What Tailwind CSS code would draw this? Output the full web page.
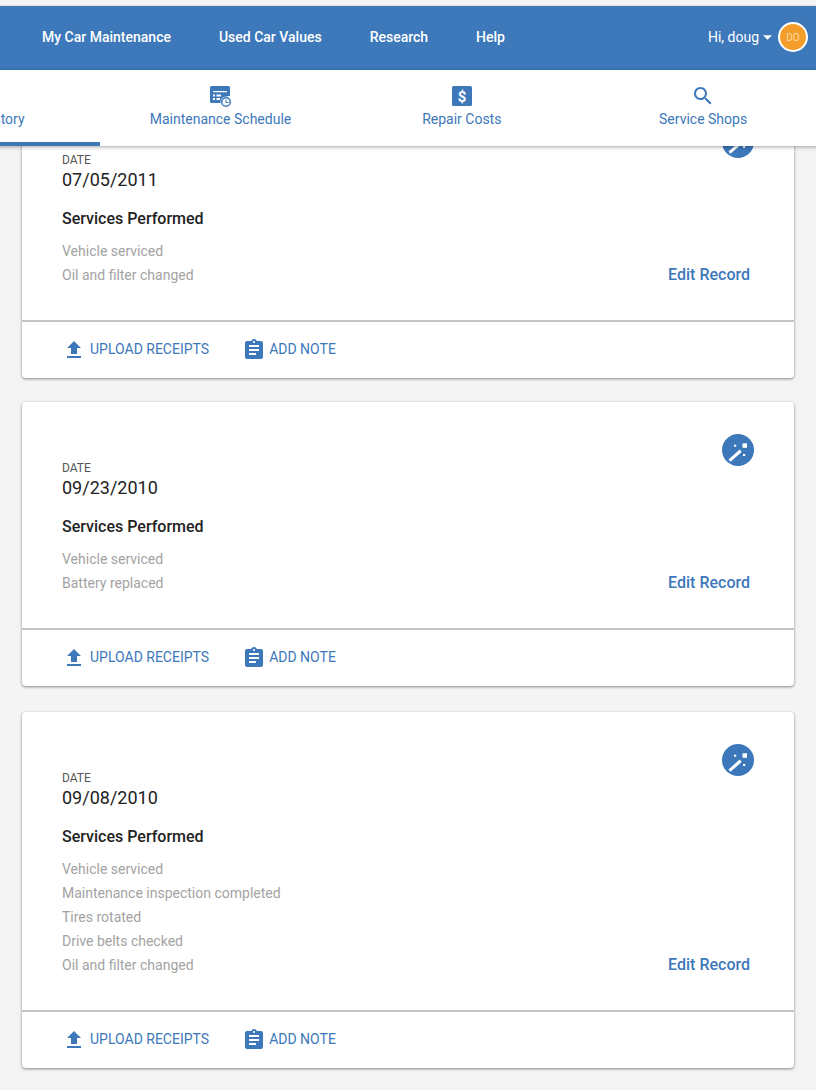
<!DOCTYPE html>
<html>
<head>
<meta charset="utf-8">
<script src="https://cdn.jsdelivr.net/npm/@tailwindcss/browser@4"></script>
</head>
<body class="bg-[#f4f4f4] font-['Roboto',sans-serif]">
<div class="relative h-[1090px] w-[816px] overflow-hidden">
  <header class="absolute inset-x-0 top-0 z-10 pt-[5px]">
    <div class="border-t border-[#e2e2e2]"></div>
    <div class="flex h-[64px] items-center justify-between bg-[#3c78ba] pb-[2px] pl-[42px] pr-2 text-[14px] text-white">
      <nav class="flex gap-12 font-medium">
        <span>My Car Maintenance</span>
        <span>Used Car Values</span>
        <span>Research</span>
        <span>Help</span>
      </nav>
      <div class="flex items-center">
        <span>Hi, doug</span>
        <svg class="ml-1 h-[5px] w-[9px]" viewBox="0 0 10 5"><path d="M0 0h10L5 5z" fill="#fff"/></svg>
        <span class="ml-[6px] flex h-[30px] w-[30px] items-center justify-center rounded-full border-2 border-white bg-[#f59d2a] text-[10px] text-[#f8d9a8]">DO</span>
      </div>
    </div>
    <div class="flex h-[76px] -ml-[142.25px] w-[966px] bg-white text-[14px] text-[#3c78ba] shadow-[0_1px_4px_rgba(0,0,0,0.35)]">
      <a class="flex w-[242.25px] flex-col items-center border-b-4 border-[#3c78ba] pr-[2px] pt-[14px]">
        <span class="h-6 w-6"></span>
        <span class="mt-[1px]">Service History</span>
      </a>
      <a class="flex w-[241.5px] flex-col items-center pt-[14px]">
        <svg class="h-6 w-6" viewBox="0 0 24 24" fill="#3c78ba"><path d="M3.500 2h17A1.500 1.500 0 0 1 22 3.500V12h-.5a6.500 6.500 0 0 0-6.500 6.500V19H3.500A1.500 1.500 0 0 1 2 17.500v-14A1.500 1.500 0 0 1 3.500 2z"/><path d="M5 7h14v1.300H5zM5 10.500h2v2H5zM8.500 10.500H13v2H8.500zM5 14h2v2H5zM8.500 14H12v2H8.500z" fill="#fff"/><circle cx="18" cy="18" r="5.500" fill="#fff"/><path d="M18 13a5 5 0 1 0 0 10 5 5 0 0 0 0-10zm0 8.500a3.500 3.500 0 1 1 0-7 3.500 3.500 0 0 1 0 7z"/><path d="M17.500 15.500h1V18h2v1h-3z"/></svg>
        <span class="mt-[1px]">Maintenance Schedule</span>
      </a>
      <a class="flex w-[241.5px] flex-col items-center pt-[14px]">
        <svg class="h-6 w-6" viewBox="0 0 24 24"><rect x="2" y="2" width="20" height="20" rx="1.500" fill="#3c78ba"/><text x="12" y="17.500" text-anchor="middle" font-family="Roboto" font-weight="700" font-size="15" fill="#fff">$</text></svg>
        <span class="mt-[1px]">Repair Costs</span>
      </a>
      <a class="flex w-[241.5px] flex-col items-center pt-[14px]">
        <svg class="h-6 w-6" viewBox="0 0 24 24" fill="#3c78ba"><path d="M15.500 14h-.79l-.28-.27C15.410 12.590 16 11.110 16 9.500 16 5.910 13.090 3 9.500 3S3 5.910 3 9.500 5.910 16 9.500 16c1.610 0 3.090-.59 4.230-1.570l.27.28v.79l5 4.990L20.490 19l-4.990-5zm-6 0C7.010 14 5 11.990 5 9.500S7.010 5 9.500 5 14 7.010 14 9.500 11.990 14 9.500 14z"/></svg>
        <span class="mt-[1px]">Service Shops</span>
      </a>
    </div>
  </header>

  <main class="flex flex-col px-[22px] pt-[94px]">
    <!-- card 1 -->
    <section class="h-[284px] rounded bg-white shadow-[0_1px_3px_rgba(0,0,0,0.45)] flex flex-col">
      <div class="relative h-[228px] shrink-0 border-b-2 border-[#c4c4c4] px-10 pt-[58px]">
        <svg class="absolute right-10 top-8 h-8 w-8" viewBox="0 0 32 32"><circle cx="16" cy="16" r="16" fill="#3c78ba"/><path d="M6.500 25.500L17.700 15.500l2 2.500L8.500 27.800z" fill="#fff"/><rect x="20.500" y="9.300" width="4.500" height="4.500" fill="#fff"/><rect x="12" y="10.700" width="2.200" height="2" fill="#fff"/><rect x="21" y="20" width="2.200" height="2" fill="#fff"/></svg>
        <p class="text-[12px] leading-4 text-[#555]">DATE</p>
        <p class="text-[18px] leading-6 text-[#222]">07/05/2011</p>
        <h3 class="mt-[15px] text-[16px] font-medium leading-6 text-[#222]">Services Performed</h3>
        <div class="mt-[8px] flex items-end justify-between">
          <ul class="text-[14px] leading-6 text-[#a3a3a3]">
            <li>Vehicle serviced</li>
            <li>Oil and filter changed</li>
          </ul>
          <span class="mr-[4px] text-[16px] font-medium leading-6 text-[#3c78ba]">Edit Record</span>
        </div>
      </div>
      <div class="flex flex-1 items-center gap-[33px] pl-10 text-[14px] text-[#3c78ba]">
        <span class="flex items-center gap-[4px]">
          <svg class="h-6 w-6" viewBox="0 0 24 24" fill="#3c78ba"><path d="M9 16h6v-6h4l-7-7-7 7h4zm-4 2h14v2H5z"/></svg><span class="pb-[2px]">UPLOAD RECEIPTS</span>
        </span>
        <span class="flex items-center gap-[3px]">
          <svg class="h-6 w-6" viewBox="0 0 24 24" fill="#3c78ba"><path d="M19 3h-4.180C14.400 1.840 13.300 1 12 1c-1.300 0-2.400.84-2.820 2H5c-1.100 0-2 .9-2 2v14c0 1.100.9 2 2 2h14c1.100 0 2-.9 2-2V5c0-1.100-.9-2-2-2zm-7 0c.55 0 1 .45 1 1s-.45 1-1 1-1-.45-1-1 .45-1 1-1zm2 14H7v-2h7v2zm3-4H7v-2h10v2zm0-4H7V7h10v2z"/></svg><span class="pb-[2px]">ADD NOTE</span>
        </span>
      </div>
    </section>

    <!-- card 2 -->
    <section class="mt-6 h-[284px] rounded bg-white shadow-[0_1px_3px_rgba(0,0,0,0.45)] flex flex-col">
      <div class="relative h-[228px] shrink-0 border-b-2 border-[#c4c4c4] px-10 pt-[58px]">
        <svg class="absolute right-10 top-8 h-8 w-8" viewBox="0 0 32 32"><circle cx="16" cy="16" r="16" fill="#3c78ba"/><path d="M6.500 25.500L17.700 15.500l2 2.500L8.500 27.800z" fill="#fff"/><rect x="20.500" y="9.300" width="4.500" height="4.500" fill="#fff"/><rect x="12" y="10.700" width="2.200" height="2" fill="#fff"/><rect x="21" y="20" width="2.200" height="2" fill="#fff"/></svg>
        <p class="text-[12px] leading-4 text-[#555]">DATE</p>
        <p class="text-[18px] leading-6 text-[#222]">09/23/2010</p>
        <h3 class="mt-[15px] text-[16px] font-medium leading-6 text-[#222]">Services Performed</h3>
        <div class="mt-[8px] flex items-end justify-between">
          <ul class="text-[14px] leading-6 text-[#a3a3a3]">
            <li>Vehicle serviced</li>
            <li>Battery replaced</li>
          </ul>
          <span class="mr-[4px] text-[16px] font-medium leading-6 text-[#3c78ba]">Edit Record</span>
        </div>
      </div>
      <div class="flex flex-1 items-center gap-[33px] pl-10 text-[14px] text-[#3c78ba]">
        <span class="flex items-center gap-[4px]">
          <svg class="h-6 w-6" viewBox="0 0 24 24" fill="#3c78ba"><path d="M9 16h6v-6h4l-7-7-7 7h4zm-4 2h14v2H5z"/></svg><span class="pb-[2px]">UPLOAD RECEIPTS</span>
        </span>
        <span class="flex items-center gap-[3px]">
          <svg class="h-6 w-6" viewBox="0 0 24 24" fill="#3c78ba"><path d="M19 3h-4.180C14.400 1.840 13.300 1 12 1c-1.300 0-2.400.84-2.820 2H5c-1.100 0-2 .9-2 2v14c0 1.100.9 2 2 2h14c1.100 0 2-.9 2-2V5c0-1.100-.9-2-2-2zm-7 0c.55 0 1 .45 1 1s-.45 1-1 1-1-.45-1-1 .45-1 1-1zm2 14H7v-2h7v2zm3-4H7v-2h10v2zm0-4H7V7h10v2z"/></svg><span class="pb-[2px]">ADD NOTE</span>
        </span>
      </div>
    </section>

    <!-- card 3 -->
    <section class="mt-[26px] h-[356px] rounded bg-white shadow-[0_1px_3px_rgba(0,0,0,0.45)] flex flex-col">
      <div class="relative h-[300px] shrink-0 border-b-2 border-[#c4c4c4] px-10 pt-[58px]">
        <svg class="absolute right-10 top-8 h-8 w-8" viewBox="0 0 32 32"><circle cx="16" cy="16" r="16" fill="#3c78ba"/><path d="M6.500 25.500L17.700 15.500l2 2.500L8.500 27.800z" fill="#fff"/><rect x="20.500" y="9.300" width="4.500" height="4.500" fill="#fff"/><rect x="12" y="10.700" width="2.200" height="2" fill="#fff"/><rect x="21" y="20" width="2.200" height="2" fill="#fff"/></svg>
        <p class="text-[12px] leading-4 text-[#555]">DATE</p>
        <p class="text-[18px] leading-6 text-[#222]">09/08/2010</p>
        <h3 class="mt-[15px] text-[16px] font-medium leading-6 text-[#222]">Services Performed</h3>
        <div class="mt-[8px] flex items-end justify-between">
          <ul class="text-[14px] leading-6 text-[#a3a3a3]">
            <li>Vehicle serviced</li>
            <li>Maintenance inspection completed</li>
            <li>Tires rotated</li>
            <li>Drive belts checked</li>
            <li>Oil and filter changed</li>
          </ul>
          <span class="mr-[4px] text-[16px] font-medium leading-6 text-[#3c78ba]">Edit Record</span>
        </div>
      </div>
      <div class="flex flex-1 items-center gap-[33px] pl-10 text-[14px] text-[#3c78ba]">
        <span class="flex items-center gap-[4px]">
          <svg class="h-6 w-6" viewBox="0 0 24 24" fill="#3c78ba"><path d="M9 16h6v-6h4l-7-7-7 7h4zm-4 2h14v2H5z"/></svg><span class="pb-[2px]">UPLOAD RECEIPTS</span>
        </span>
        <span class="flex items-center gap-[3px]">
          <svg class="h-6 w-6" viewBox="0 0 24 24" fill="#3c78ba"><path d="M19 3h-4.180C14.400 1.840 13.300 1 12 1c-1.300 0-2.400.84-2.820 2H5c-1.100 0-2 .9-2 2v14c0 1.100.9 2 2 2h14c1.100 0 2-.9 2-2V5c0-1.100-.9-2-2-2zm-7 0c.55 0 1 .45 1 1s-.45 1-1 1-1-.45-1-1 .45-1 1-1zm2 14H7v-2h7v2zm3-4H7v-2h10v2zm0-4H7V7h10v2z"/></svg><span class="pb-[2px]">ADD NOTE</span>
        </span>
      </div>
    </section>
  </main>
</div>
</body>
</html>
